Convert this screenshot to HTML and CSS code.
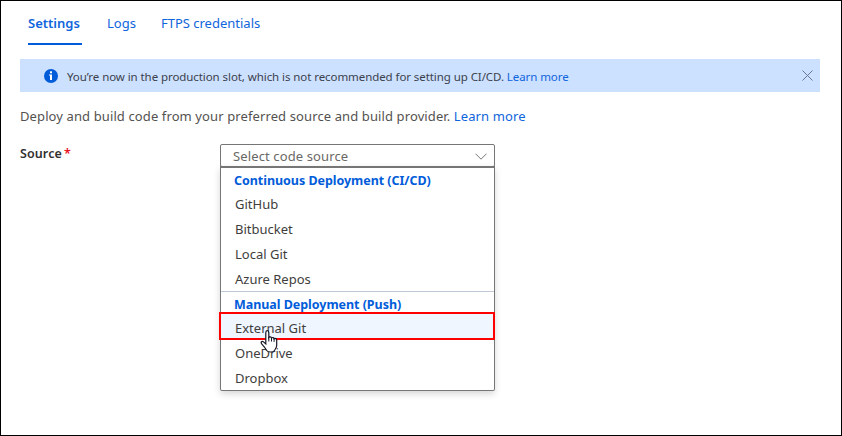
FILE: index.html
```html
<!DOCTYPE html>
<html lang="en">
<head>
<meta charset="utf-8">
<title>Deployment Center</title>
<link rel="stylesheet" href="styles.css">
</head>
<body>
<main class="page">
  <nav class="tabs">
    <a class="tab active">Settings</a>
    <a class="tab">Logs</a>
    <a class="tab">FTPS credentials</a>
  </nav>
  <div class="banner">
    <svg class="info" viewBox="0 0 14 14"><circle cx="7" cy="7" r="7" fill="#015cda"/><rect x="6" y="2.3" width="2" height="2" fill="#fff"/><path d="M5 5.5h3V11H6V6.5H5z" fill="#fff"/></svg>
    <span class="banner-text">You’re now in the production slot, which is not recommended for setting up CI/CD. <a>Learn more</a></span>
    <svg class="close" viewBox="0 0 11 11"><path d="M.5.5l10 10M10.5.5l-10 10" fill="none" stroke="#68788f"/></svg>
  </div>
  <p class="intro">Deploy and build code from your preferred source and build provider. <a>Learn more</a></p>
  <div class="field">
    <label class="label">Source<span class="required">*</span></label>
    <div class="dropdown">
      <div class="select"><span class="placeholder">Select code source</span>
        <svg class="chevron" viewBox="0 0 12 7"><path d="M.5.7L6 6.2 11.5.7" fill="none" stroke="#777"/></svg>
      </div>
      <div class="list">
        <div class="heading">Continuous Deployment (CI/CD)</div>
        <div class="option">GitHub</div>
        <div class="option">Bitbucket</div>
        <div class="option">Local Git</div>
        <div class="option last">Azure Repos</div>
        <div class="heading">Manual Deployment (Push)</div>
        <div class="option hovered"><span>External Git</span>
          <svg class="cursor" viewBox="0 0 18 24"><path d="M5.8 13V3.2C5.8.5 8.8.5 8.8 3.2V8c.6-1 2.5-.7 2.7.5.8-.9 2.4-.5 2.6.8 1-.8 2.6-.2 2.6 1.4v5.2c0 2.2-1.4 3.4-2.2 5.1-1.2 2-6.3 2-7.8 0-1.1-2.2-3-4.5-5-6.7-1.4-1.7.4-3 1.8-1.9l2.3 2z" fill="#fff" stroke="#161625" stroke-width="1.2"/><path d="M8.8 7.5V12M11.5 8.5V12M14.1 9.3v3" fill="none" stroke="#161625"/></svg>
        </div>
        <div class="option">OneDrive</div>
        <div class="option">Dropbox</div>
      </div>
    </div>
  </div>
</main>
</body>
</html>
```
FILE: styles.css
```css
* { box-sizing: border-box; }
body { margin: 0; font: 13px/20px "Noto Sans", "Open Sans", sans-serif; color: #545250; background: #fff; }
a { color: #0f65dc; }
.page { width: 842px; height: 436px; border: 1px solid #000; overflow: hidden; padding: 0 21px 0 19px; }
.tabs { display: flex; height: 44px; padding-left: 8px; gap: 25px; }
.tab { height: 44px; padding-top: 12px; white-space: nowrap; }
.tab.active { width: 54px; font-weight: 600; border-bottom: 2px solid #015cda; }
.banner { display: flex; align-items: center; height: 33px; margin-top: 14px; padding: 0 7px 0 24px; background: #cce0ff; }
.info { width: 14px; height: 14px; margin-right: 9px; }
.banner-text { flex: 1; font-size: 11.5px; letter-spacing: -.075px; color: #3b424d; white-space: nowrap; padding-top: 2px; }
.close { width: 11px; height: 11px; margin-top: -1px; }
.intro { margin: 14px 0 0; letter-spacing: .11px; white-space: nowrap; }
.field { display: flex; margin-top: 18px; }
.label { width: 200px; font-weight: 600; font-size: 12.5px; letter-spacing: .1px; color: #323130; }
.required { color: #e81123; margin-left: 2px; }
.dropdown { width: 275px; }
.select { display: flex; align-items: center; justify-content: space-between; height: 23px; padding: 1px 7px 0 12px; border: 1px solid #767676; border-radius: 2px; color: #6a6866; letter-spacing: .12px; }
.chevron { width: 12px; height: 7px; }
.list { height: 225px; margin-top: -1px; border: 1px solid #767676; border-top-width: 2px; border-radius: 0 0 2px 2px; box-shadow: 0 3px 7px rgba(0,0,0,.16); color: #403e3d; }
.heading { height: 24px; padding-left: 13px; line-height: 25px; font-size: 12.5px; font-weight: 700; letter-spacing: -.04px; color: #015cda; white-space: nowrap; }
.option { height: 25px; padding-left: 14px; line-height: 25px; }
.option.last { border-bottom: 1px solid #c0cad8; }
.option.hovered { position: relative; }
.option.hovered::before { content: ""; position: absolute; inset: -4px -1px 1px -2px; border: 2px solid #f00; background: #eff6ff; }
.option.hovered span { position: relative; }
.cursor { position: absolute; z-index: 1; left: 39px; top: 13px; width: 18px; height: 25px; }
```
